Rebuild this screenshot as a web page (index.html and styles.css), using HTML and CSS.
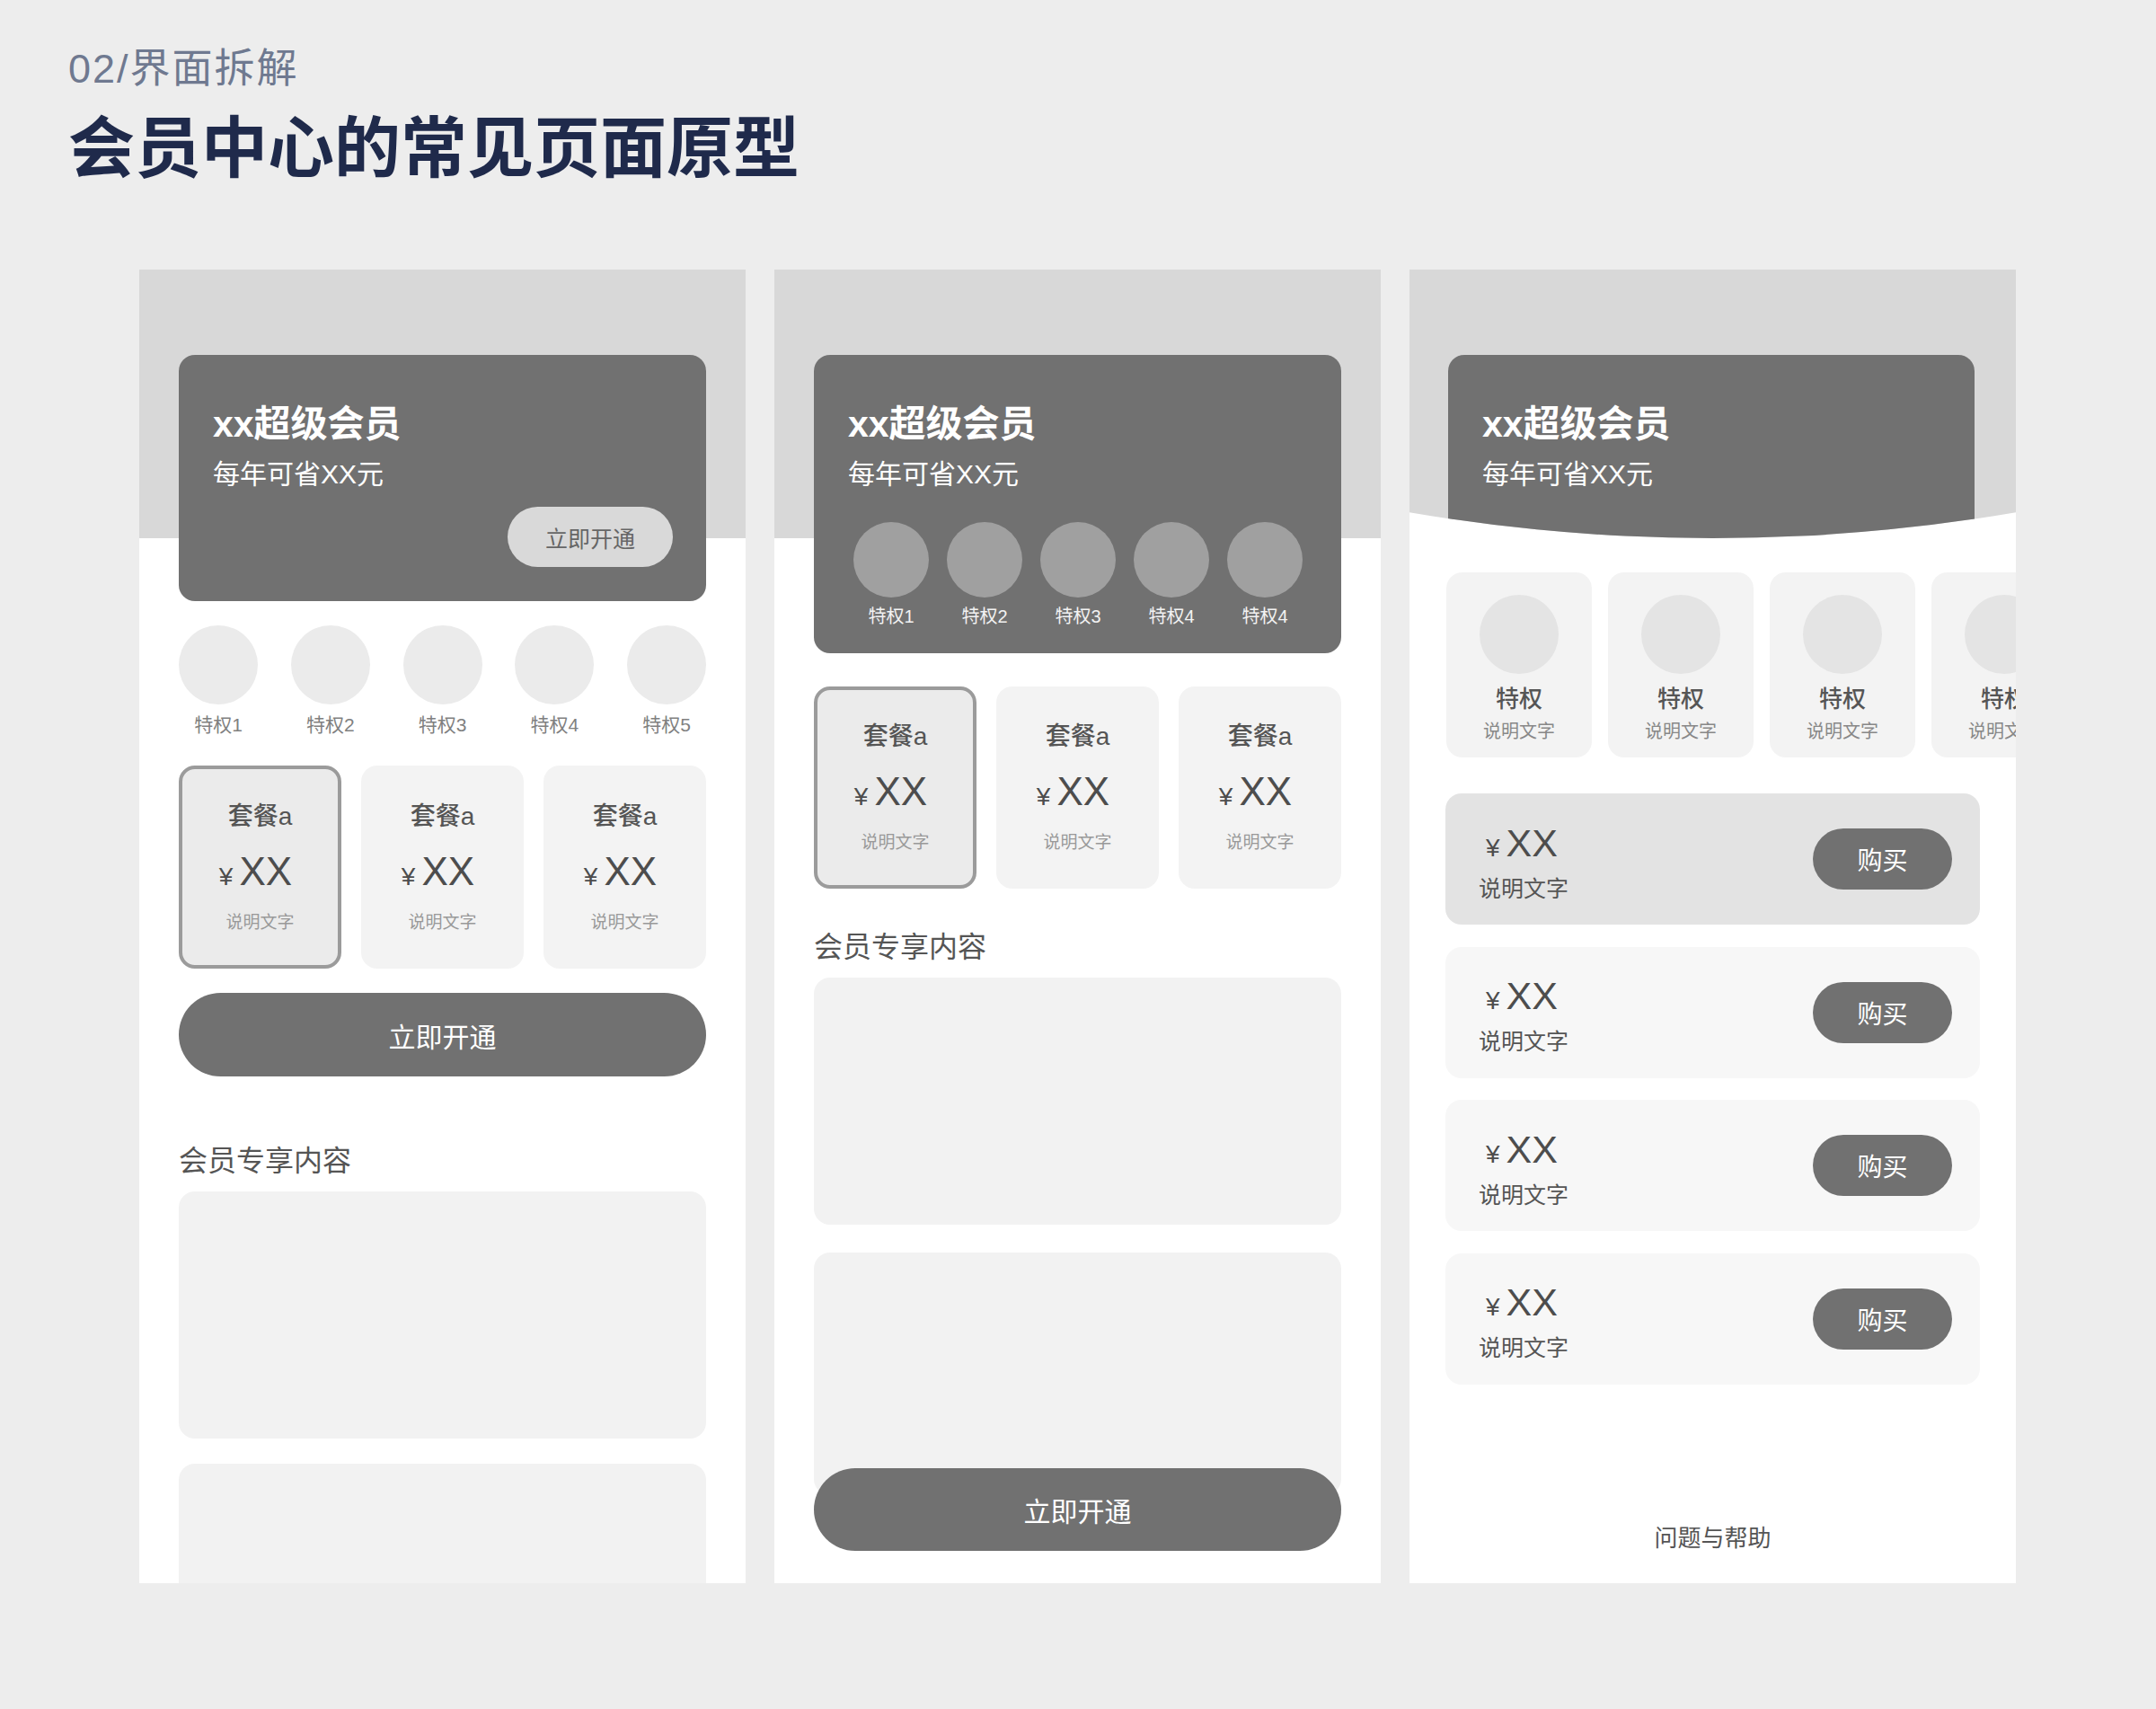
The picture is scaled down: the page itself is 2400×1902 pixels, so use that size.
FILE: index.html
```html
<html>
<head>
    <link rel="stylesheet" href="styles.css">
</head>
<body>
    <div class="page">
        <div class="page-head">
            <div class="page-sub">02/界面拆解</div>
            <div class="page-title">会员中心的常见页面原型</div>
        </div>

        <div class="screens">
            <!-- 方案一 -->
            <div class="screen">
                <div class="vip-card">
                    <div class="vip-name">xx超级会员</div>
                    <div class="vip-save">每年可省XX元</div>
                    <div class="vip-action"><span class="btn-light">立即开通</span></div>
                </div>
                <div class="perks">
                    <div class="perk"><div class="perk-dot"></div><div class="perk-name">特权1</div></div>
                    <div class="perk"><div class="perk-dot"></div><div class="perk-name">特权2</div></div>
                    <div class="perk"><div class="perk-dot"></div><div class="perk-name">特权3</div></div>
                    <div class="perk"><div class="perk-dot"></div><div class="perk-name">特权4</div></div>
                    <div class="perk"><div class="perk-dot"></div><div class="perk-name">特权5</div></div>
                </div>
                <div class="plans">
                    <div class="plan active">
                        <div class="plan-name">套餐a</div>
                        <div class="plan-price"><span class="yen">¥</span>XX</div>
                        <div class="plan-desc">说明文字</div>
                    </div>
                    <div class="plan">
                        <div class="plan-name">套餐a</div>
                        <div class="plan-price"><span class="yen">¥</span>XX</div>
                        <div class="plan-desc">说明文字</div>
                    </div>
                    <div class="plan">
                        <div class="plan-name">套餐a</div>
                        <div class="plan-price"><span class="yen">¥</span>XX</div>
                        <div class="plan-desc">说明文字</div>
                    </div>
                </div>
                <div class="btn-main">立即开通</div>
                <div class="section-title">会员专享内容</div>
                <div class="block"></div>
                <div class="block"></div>
            </div>

            <!-- 方案二 -->
            <div class="screen screen-two">
                <div class="vip-card">
                    <div class="vip-name">xx超级会员</div>
                    <div class="vip-save">每年可省XX元</div>
                    <div class="card-perks">
                        <div class="perk"><div class="perk-dot"></div><div class="perk-name">特权1</div></div>
                        <div class="perk"><div class="perk-dot"></div><div class="perk-name">特权2</div></div>
                        <div class="perk"><div class="perk-dot"></div><div class="perk-name">特权3</div></div>
                        <div class="perk"><div class="perk-dot"></div><div class="perk-name">特权4</div></div>
                        <div class="perk"><div class="perk-dot"></div><div class="perk-name">特权4</div></div>
                    </div>
                </div>
                <div class="plans">
                    <div class="plan active">
                        <div class="plan-name">套餐a</div>
                        <div class="plan-price"><span class="yen">¥</span>XX</div>
                        <div class="plan-desc">说明文字</div>
                    </div>
                    <div class="plan">
                        <div class="plan-name">套餐a</div>
                        <div class="plan-price"><span class="yen">¥</span>XX</div>
                        <div class="plan-desc">说明文字</div>
                    </div>
                    <div class="plan">
                        <div class="plan-name">套餐a</div>
                        <div class="plan-price"><span class="yen">¥</span>XX</div>
                        <div class="plan-desc">说明文字</div>
                    </div>
                </div>
                <div class="section-title">会员专享内容</div>
                <div class="block"></div>
                <div class="block"></div>
                <div class="btn-main btn-fixed">立即开通</div>
            </div>

            <!-- 方案三 -->
            <div class="screen screen-three">
                <div class="hero">
                    <div class="vip-card">
                        <div class="vip-name">xx超级会员</div>
                        <div class="vip-save">每年可省XX元</div>
                    </div>
                </div>
                <div class="perk-cards">
                    <div class="perk-card"><div class="perk-dot"></div><div class="perk-title">特权</div><div class="perk-desc">说明文字</div></div>
                    <div class="perk-card"><div class="perk-dot"></div><div class="perk-title">特权</div><div class="perk-desc">说明文字</div></div>
                    <div class="perk-card"><div class="perk-dot"></div><div class="perk-title">特权</div><div class="perk-desc">说明文字</div></div>
                    <div class="perk-card"><div class="perk-dot"></div><div class="perk-title">特权</div><div class="perk-desc">说明文字</div></div>
                </div>
                <div class="offers">
                    <div class="offer active">
                        <div class="offer-info">
                            <div class="offer-price"><span class="yen">¥</span>XX</div>
                            <div class="offer-desc">说明文字</div>
                        </div>
                        <span class="btn-buy">购买</span>
                    </div>
                    <div class="offer">
                        <div class="offer-info">
                            <div class="offer-price"><span class="yen">¥</span>XX</div>
                            <div class="offer-desc">说明文字</div>
                        </div>
                        <span class="btn-buy">购买</span>
                    </div>
                    <div class="offer">
                        <div class="offer-info">
                            <div class="offer-price"><span class="yen">¥</span>XX</div>
                            <div class="offer-desc">说明文字</div>
                        </div>
                        <span class="btn-buy">购买</span>
                    </div>
                    <div class="offer">
                        <div class="offer-info">
                            <div class="offer-price"><span class="yen">¥</span>XX</div>
                            <div class="offer-desc">说明文字</div>
                        </div>
                        <span class="btn-buy">购买</span>
                    </div>
                </div>
                <div class="help">问题与帮助</div>
            </div>
        </div>
    </div>
</body>
</html>
```

FILE: styles.css
```css
body {
    margin: 0;
    background-color: #ededed;
    font-family: "Liberation Sans", "Noto Sans CJK SC", sans-serif;
}
.page {
    padding: 50px 0 0 76px;
}
.page-sub {
    font-size: 45px;
    line-height: 54px;
    letter-spacing: 2px;
    color: #6f7990;
}
.page-title {
    margin-top: 17px;
    font-size: 74px;
    line-height: 90px;
    font-weight: 700;
    color: #1f2a4b;
}
.screens {
    display: flex;
    gap: 32px;
    margin-top: 89px;
    padding-left: 79px;
}

/* 手机画板 */
.screen {
    position: relative;
    width: 675px;
    height: 1462px;
    box-sizing: border-box;
    padding: 95px 44px 0;
    overflow: hidden;
    background: linear-gradient(#d8d8d8 0, #d8d8d8 299px, #fff 299px);
}

/* 会员卡 */
.vip-card {
    background-color: #717171;
    border-radius: 18px;
    padding: 53px 37px 38px 38px;
    color: #fff;
}
.vip-name {
    font-size: 41px;
    line-height: 48px;
    font-weight: 700;
}
.vip-save {
    margin-top: 12px;
    font-size: 30px;
    line-height: 40px;
}
.vip-action {
    display: flex;
    justify-content: flex-end;
    margin-top: 16px;
}
.btn-light {
    width: 184px;
    height: 67px;
    border-radius: 34px;
    background-color: #d9d9d9;
    color: #666;
    font-size: 25px;
    display: flex;
    align-items: center;
    justify-content: center;
}

/* 特权图标 */
.perks {
    display: flex;
    justify-content: space-between;
    margin-top: 27px;
}
.perk {
    width: 88px;
    display: flex;
    flex-direction: column;
    align-items: center;
}
.perk-dot {
    width: 88px;
    height: 88px;
    border-radius: 50%;
    background-color: #ebebeb;
}
.perk-name {
    margin-top: 9px;
    font-size: 21px;
    line-height: 28px;
    color: #808080;
    white-space: nowrap;
}

/* 套餐 */
.plans {
    display: grid;
    grid-template-columns: repeat(3, 1fr);
    gap: 22px;
    margin-top: 31px;
}
.plan {
    height: 226px;
    box-sizing: border-box;
    border: 4px solid transparent;
    border-radius: 18px;
    background-color: #f3f3f3;
    display: flex;
    flex-direction: column;
    align-items: center;
    justify-content: center;
}
.plan.active {
    border-color: #9b9b9b;
    background-color: #ebebeb;
}
.plan-name {
    font-size: 28px;
    line-height: 34px;
    font-weight: 500;
    color: #555;
}
.plan-price {
    margin-top: 19px;
    font-size: 44px;
    line-height: 50px;
    color: #4d4d4d;
    margin-right: 10px;
}
.yen {
    font-size: 28px;
    margin-right: 7px;
}
.plan-desc {
    margin-top: 14px;
    font-size: 19px;
    line-height: 24px;
    color: #999;
}

.btn-main {
    margin-top: 27px;
    height: 93px;
    border-radius: 47px;
    background-color: #717171;
    color: #fff;
    font-size: 30px;
    display: flex;
    align-items: center;
    justify-content: center;
}
.section-title {
    margin-top: 74px;
    font-size: 32px;
    line-height: 40px;
    color: #555;
}
.block {
    margin-top: 14px;
    height: 275px;
    border-radius: 18px;
    background-color: #f2f2f2;
}
.block + .block {
    margin-top: 28px;
}

/* 方案二 */
.screen-two .vip-card {
    padding-bottom: 28px;
}
.card-perks {
    display: flex;
    justify-content: center;
    gap: 20px;
    margin-top: 33px;
}
.card-perks .perk {
    width: 84px;
}
.card-perks .perk-dot {
    width: 84px;
    height: 84px;
    background-color: #a0a0a0;
}
.card-perks .perk-name {
    margin-top: 8px;
    font-size: 20px;
    line-height: 26px;
    color: #f2f2f2;
}
.screen-two .plans {
    margin-top: 37px;
}
.screen-two .plan {
    height: 225px;
}
.screen-two .section-title {
    margin-top: 45px;
}
.screen-two .block + .block {
    margin-top: 31px;
    height: 270px;
}
.btn-fixed {
    position: absolute;
    left: 44px;
    right: 44px;
    bottom: 36px;
    height: 92px;
    margin-top: 0;
}

/* 方案三 */
.screen-three {
    display: flex;
    flex-direction: column;
    padding: 0;
    background: #fff;
}
.hero {
    flex: none;
    height: 299px;
    box-sizing: border-box;
    padding: 95px 0 0 43px;
    background-color: #d8d8d8;
    clip-path: circle(2000px at 50% calc(100% - 2000px));
}
.hero .vip-card {
    width: 586px;
    height: 320px;
    box-sizing: border-box;
}
.perk-cards {
    display: flex;
    gap: 18px;
    margin-top: 38px;
    padding-left: 41px;
}
.perk-card {
    flex: 0 0 162px;
    height: 206px;
    box-sizing: border-box;
    padding-top: 25px;
    border-radius: 18px;
    background-color: #f3f3f3;
    display: flex;
    flex-direction: column;
    align-items: center;
}
.perk-card .perk-dot {
    background-color: #e4e4e4;
}
.perk-title {
    margin-top: 12px;
    font-size: 26px;
    line-height: 32px;
    font-weight: 500;
    color: #555;
}
.perk-desc {
    margin-top: 7px;
    font-size: 20px;
    line-height: 26px;
    color: #888;
    white-space: nowrap;
}
.offers {
    display: flex;
    flex-direction: column;
    gap: 24.5px;
    margin-top: 40px;
    padding: 0 40px;
}
.offer {
    height: 146px;
    box-sizing: border-box;
    padding: 0 31px 0 37px;
    border-radius: 18px;
    background-color: #f7f7f7;
    display: flex;
    align-items: center;
    justify-content: space-between;
}
.offer.active {
    background-color: #e3e3e3;
}
.offer-info {
    padding-top: 4px;
}
.offer-price {
    font-size: 43px;
    line-height: 50px;
    color: #4d4d4d;
    padding-left: 8px;
}
.offer-desc {
    margin-top: 5px;
    font-size: 25px;
    line-height: 30px;
    color: #555;
}
.btn-buy {
    width: 155px;
    height: 68px;
    border-radius: 34px;
    background-color: #717171;
    color: #fff;
    font-size: 28px;
    display: flex;
    align-items: center;
    justify-content: center;
}
.help {
    margin-top: auto;
    padding-bottom: 34px;
    text-align: center;
    font-size: 26px;
    line-height: 32px;
    color: #555;
}
```
